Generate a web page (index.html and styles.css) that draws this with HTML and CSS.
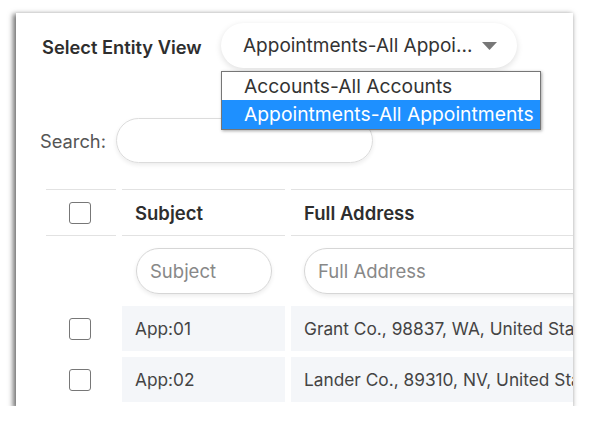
FILE: index.html
```html
<!DOCTYPE html>
<html>
<head>
<meta charset="utf-8">
<link rel="stylesheet" href="styles.css">
</head>
<body>
<div class="frame">
  <div class="top-row">
    <span class="entity-label">Select Entity View</span>
    <div class="select-wrap">
      <div class="select-pill">
        <span class="select-text">Appointments-All Appoi...</span>
        <svg class="caret" width="15" height="8" viewBox="0 0 15 8"><path d="M0 0 L15 0 L7.5 8 Z" fill="#777"/></svg>
      </div>
      <div class="listbox">
        <div class="option">Accounts-All Accounts</div>
        <div class="option selected">Appointments-All Appointments</div>
      </div>
    </div>
  </div>
  <div class="search-row">
    <span class="search-label">Search:</span>
    <div class="search-input"></div>
  </div>
  <div class="grid">
    <div class="hcell check-cell"><span class="checkbox"></span></div>
    <div class="hcell">Subject</div>
    <div class="hcell">Full Address</div>

    <div class="fcell"></div>
    <div class="fcell"><div class="filter subj">Subject</div></div>
    <div class="fcell"><div class="filter addr">Full Address</div></div>

    <div class="dcell check-cell"><span class="checkbox"></span></div>
    <div class="dcell shaded">App:01</div>
    <div class="dcell shaded">Grant Co., 98837, WA, United States</div>

    <div class="dcell check-cell"><span class="checkbox"></span></div>
    <div class="dcell shaded">App:02</div>
    <div class="dcell shaded">Lander Co., 89310, NV, United States</div>
  </div>
</div>
</body>
</html>
```
FILE: styles.css
```css
html, body {
  margin: 0;
  padding: 0;
  background: #fff;
}
body {
  font-family: Inter, "Open Sans", sans-serif;
  color: #333;
}
.frame {
  margin: 13px 0 0 16px;
  width: 557px;
  height: 393px;
  background: #fff;
  overflow: hidden;
  box-shadow: -2px 2px 5px 1px rgba(0,0,0,0.55);
  position: relative;
}
.top-row {
  display: flex;
  align-items: center;
  padding: 10px 0 0 26px;
}
.entity-label {
  font-size: 18.3px;
  font-weight: 600;
  color: #2e2e2e;
  width: 179px;
  flex-shrink: 0;
  white-space: nowrap;
  padding-top: 2px;
}
.select-wrap {
  position: relative;
}
.select-pill {
  width: 296px;
  height: 45px;
  box-sizing: border-box;
  border-radius: 23px;
  background: #fff;
  box-shadow: 0 2px 6px rgba(0,0,0,0.13);
  display: flex;
  align-items: center;
  padding-left: 22px;
}
.select-text {
  font-size: 19px;
  color: #333;
  width: 239px;
  flex-shrink: 0;
  white-space: nowrap;
}
.caret {
  display: block;
}
.listbox {
  position: absolute;
  left: 0;
  top: 48px;
  width: 318px;
  border: 1px solid #767676;
  background: #fff;
  box-shadow: 1px 1px 3px rgba(0,0,0,0.35);
  z-index: 5;
}
.option {
  height: 28px;
  line-height: 28px;
  padding-left: 22px;
  font-size: 19.3px;
  color: #333;
  white-space: nowrap;
}
.option.selected {
  height: 29px;
  line-height: 29px;
  background: #1e90ff;
  color: #fff;
}
.search-row {
  display: flex;
  align-items: center;
  margin-top: 50px;
  padding-left: 24px;
}
.search-label {
  font-size: 18.3px;
  color: #555;
  width: 76px;
  flex-shrink: 0;
}
.search-input {
  width: 257px;
  height: 45px;
  box-sizing: border-box;
  border: 1px solid #dcdcdc;
  border-radius: 23px;
  box-shadow: 0 2px 4px rgba(0,0,0,0.08);
}
.grid {
  display: grid;
  grid-template-columns: 70px 163px 330px;
  column-gap: 6px;
  margin: 26px 0 0 30px;
}
.hcell {
  height: 47px;
  box-sizing: border-box;
  border-top: 1px solid #e2e2e2;
  border-bottom: 1px solid #e2e2e2;
  display: flex;
  align-items: center;
  padding-left: 13px;
  font-size: 18.5px;
  font-weight: 600;
  color: #2e2e2e;
  white-space: nowrap;
}
.check-cell {
  padding-left: 23px;
}
.checkbox {
  display: block;
  width: 22px;
  height: 22px;
  box-sizing: border-box;
  border: 1.5px solid #777;
  border-radius: 3px;
  background: #fff;
}
.fcell {
  height: 70px;
  padding-top: 12px;
  box-sizing: border-box;
}
.filter {
  height: 46px;
  box-sizing: border-box;
  border: 1px solid #d6d6d6;
  border-radius: 23px;
  box-shadow: 0 2px 4px rgba(0,0,0,0.08);
  display: flex;
  align-items: center;
  padding-left: 13px;
  font-size: 18.5px;
  color: #888;
  white-space: nowrap;
}
.filter.subj {
  margin-left: 14px;
  width: 136px;
}
.filter.addr {
  margin-left: 13px;
  width: 320px;
}
.dcell {
  height: 45px;
  margin-bottom: 6px;
  display: flex;
  align-items: center;
  padding-left: 13px;
  font-size: 17.3px;
  color: #444;
  white-space: nowrap;
  overflow: hidden;
}
.dcell.check-cell {
  padding-left: 23px;
}
.shaded {
  background: #f4f6f9;
}
```
